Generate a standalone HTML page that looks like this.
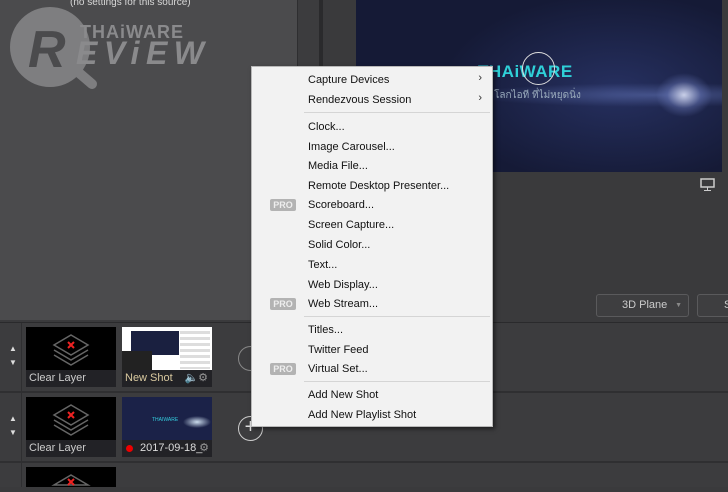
<!DOCTYPE html>
<html><head><meta charset="utf-8"><style>
*{margin:0;padding:0;box-sizing:border-box}
body{width:728px;height:487px;overflow:hidden;background:#3a3a3c;font-family:"Liberation Sans",sans-serif;position:relative}
.a{position:absolute}
.menu{left:251px;top:66px;width:242px;height:361px;background:#f2f2f2;border:1px solid #b8b8b8;box-shadow:2px 2px 4px rgba(0,0,0,.5)}
.it{position:absolute;left:56px;font-size:11px;color:#111;line-height:14px}
.pro{position:absolute;left:18px;width:26px;height:12px;background:#b3b3b3;color:#eee;font-size:9px;font-weight:bold;text-align:center;line-height:12px;border-radius:2px}
.sep{position:absolute;left:52px;right:2px;height:1px;background:#d5d5d5}
.arr{position:absolute;right:10px;font-size:11px;color:#333}
.th{position:absolute;width:90px;height:60px;background:#000}
.cap{position:absolute;left:0;bottom:0;width:100%;height:17px;background:#222226;color:#ccc;font-size:11px;line-height:17px;padding-left:3px}
</style></head><body>
<div class="a" style="left:0;top:0;width:297px;height:320px;background:#4b4b4d"></div>
<div class="a" style="left:297px;top:0;width:22px;height:320px;background:#3c3c3e;border-left:1px solid #2e2e30"></div>
<div class="a" style="left:319px;top:0;width:4px;height:320px;background:#2a2a2c"></div>
<div class="a" style="left:70px;top:-3px;font-size:10px;color:#d8d8d8">(no settings for this source)</div>
<!-- logo -->
<svg class="a" style="left:0;top:0" width="220" height="95" viewBox="0 0 220 95">
<circle cx="50" cy="47" r="40" fill="#7e7e80"/>
<line x1="78" y1="72" x2="92" y2="84" stroke="#7e7e80" stroke-width="10" stroke-linecap="round"/>
<text x="28" y="67" font-family="Liberation Sans" font-weight="bold" font-style="italic" font-size="52" fill="#4b4b4d">R</text>
<text x="80" y="38" font-family="Liberation Sans" font-weight="bold" font-size="18" fill="#8a8a8c" textLength="103">THAiWARE</text>
<text x="76" y="64" font-family="Liberation Sans" font-weight="bold" font-style="italic" font-size="32" fill="#8a8a8c" textLength="128">EViEW</text>
</svg>
<!-- preview -->
<div class="a" style="left:356px;top:0;width:366px;height:172px;background:radial-gradient(ellipse 28px 22px at 328px 95px,rgba(225,230,250,.85),rgba(110,125,190,.4) 60%,transparent 100%),radial-gradient(ellipse 190px 12px at 300px 95px,rgba(110,130,200,.45),transparent),radial-gradient(ellipse 220px 120px at 260px 90px,#263060,#151a36 80%),#141a33"></div>
<div class="a" style="left:478px;top:62px;font-size:17px;font-weight:bold;color:#2fd0d8;letter-spacing:0.5px">THAiWARE</div>
<div class="a" style="left:494px;top:88px;font-size:10px;color:#9ab">โลกไอที ที่ไม่หยุดนิ่ง</div>
<div class="a" style="left:522px;top:52px;width:33px;height:33px;border:1.5px solid #ddd;border-radius:50%"></div>
<svg class="a" style="left:700px;top:178px" width="16" height="14"><rect x="1" y="1" width="13" height="8" fill="none" stroke="#ccc" stroke-width="1.5"/><line x1="7.5" y1="9" x2="7.5" y2="12" stroke="#ccc"/><line x1="4" y1="12.5" x2="11" y2="12.5" stroke="#ccc"/></svg>
<div class="a" style="left:596px;top:294px;width:93px;height:23px;border:1px solid #5a5a5c;border-radius:3px;background:#3e3e40;color:#ccc;font-size:11px;line-height:21px;padding-left:25px">3D Plane<span style="position:absolute;right:6px;font-size:7px;color:#888">▼</span></div>
<div class="a" style="left:697px;top:294px;width:40px;height:23px;border:1px solid #5a5a5c;border-radius:3px;background:#3e3e40;color:#ccc;font-size:11px;line-height:21px;padding-left:26px">S</div>
<!-- rows -->
<div class="a" style="left:0;top:322px;width:728px;height:165px;background:#3c3c3e"></div>
<div class="a" style="left:0;top:322px;width:728px;height:1px;background:#2a2a2c"></div>
<div class="a" style="left:0;top:391px;width:728px;height:2px;background:#2f2f31"></div>
<div class="a" style="left:0;top:461px;width:728px;height:2px;background:#2f2f31"></div>
<div class="a" style="left:21px;top:323px;width:1px;height:164px;background:#2f2f31"></div>
<div class="a" style="left:9px;top:342px;font-size:8px;color:#ddd;line-height:14px">▲<br>▼</div>
<div class="a" style="left:9px;top:412px;font-size:8px;color:#ddd;line-height:14px">▲<br>▼</div>
<div class="th" style="left:26px;top:327px"><svg width="90" height="43"><g fill="none" stroke="#666" stroke-width="1.5"><path d="M45 8 L62 18 L45 28 L28 18Z"/><path d="M28 23 L45 33 L62 23"/><path d="M28 28 L45 38 L62 28"/></g><path d="M42 15 L48 21 M48 15 L42 21" stroke="#e22" stroke-width="2"/></svg><div class="cap">Clear Layer</div></div>
<div class="th" style="left:122px;top:327px;background:#fff"><div style="position:absolute;left:9px;top:4px;width:48px;height:24px;background:#1a2040"></div><div style="position:absolute;left:0;top:24px;width:30px;height:19px;background:#222"></div><div style="position:absolute;left:58px;top:4px;width:30px;height:38px;background:repeating-linear-gradient(#ddd 0 3px,#fff 3px 6px)"></div><div class="cap" style="color:#d9c9a0">New Shot <span style="position:absolute;right:4px;color:#999">🔈⚙</span></div></div>
<div class="a" style="left:238px;top:346px;width:25px;height:25px;border:1.5px solid #888;border-radius:50%"></div>
<div class="th" style="left:26px;top:397px"><svg width="90" height="43"><g fill="none" stroke="#666" stroke-width="1.5"><path d="M45 8 L62 18 L45 28 L28 18Z"/><path d="M28 23 L45 33 L62 23"/><path d="M28 28 L45 38 L62 28"/></g><path d="M42 15 L48 21 M48 15 L42 21" stroke="#e22" stroke-width="2"/></svg><div class="cap">Clear Layer</div></div>
<div class="th" style="left:122px;top:397px;background:radial-gradient(ellipse 14px 6px at 75px 25px,#cde,transparent),#1b2248"><div style="position:absolute;left:30px;top:20px;font-size:5px;color:#3cd">THAIWARE</div><div class="cap" style="padding-left:18px;color:#ddd">2017-09-18_<span style="position:absolute;left:4px;top:5px;width:7px;height:7px;border-radius:50%;background:#e00"></span><span style="position:absolute;right:3px;color:#999">⚙</span></div></div>
<div class="a" style="left:238px;top:416px;width:25px;height:25px;border:1.5px solid #ccc;border-radius:50%;color:#ddd;font-size:20px;line-height:20px;text-align:center">+</div>
<div class="th" style="left:26px;top:467px;height:20px"><svg width="90" height="20"><path d="M45 8 L62 18 L28 18Z" fill="none" stroke="#666" stroke-width="1.5"/><path d="M42 12 L48 18 M48 12 L42 18" stroke="#e22" stroke-width="2"/></svg></div>
<!-- menu -->
<div class="a menu">
<div class="it" style="top:6px">Capture Devices</div><div class="arr" style="top:5px">›</div>
<div class="it" style="top:26px">Rendezvous Session</div><div class="arr" style="top:25px">›</div>
<div class="sep" style="top:45px"></div>
<div class="it" style="top:53px">Clock...</div>
<div class="it" style="top:73px">Image Carousel...</div>
<div class="it" style="top:92px">Media File...</div>
<div class="it" style="top:112px">Remote Desktop Presenter...</div>
<div class="pro" style="top:132px">PRO</div><div class="it" style="top:131px">Scoreboard...</div>
<div class="it" style="top:151px">Screen Capture...</div>
<div class="it" style="top:171px">Solid Color...</div>
<div class="it" style="top:191px">Text...</div>
<div class="it" style="top:211px">Web Display...</div>
<div class="pro" style="top:231px">PRO</div><div class="it" style="top:230px">Web Stream...</div>
<div class="sep" style="top:249px"></div>
<div class="it" style="top:256px">Titles...</div>
<div class="it" style="top:276px">Twitter Feed</div>
<div class="pro" style="top:296px">PRO</div><div class="it" style="top:295px">Virtual Set...</div>
<div class="sep" style="top:314px"></div>
<div class="it" style="top:321px">Add New Shot</div>
<div class="it" style="top:341px">Add New Playlist Shot</div>
</div>
</body></html>
